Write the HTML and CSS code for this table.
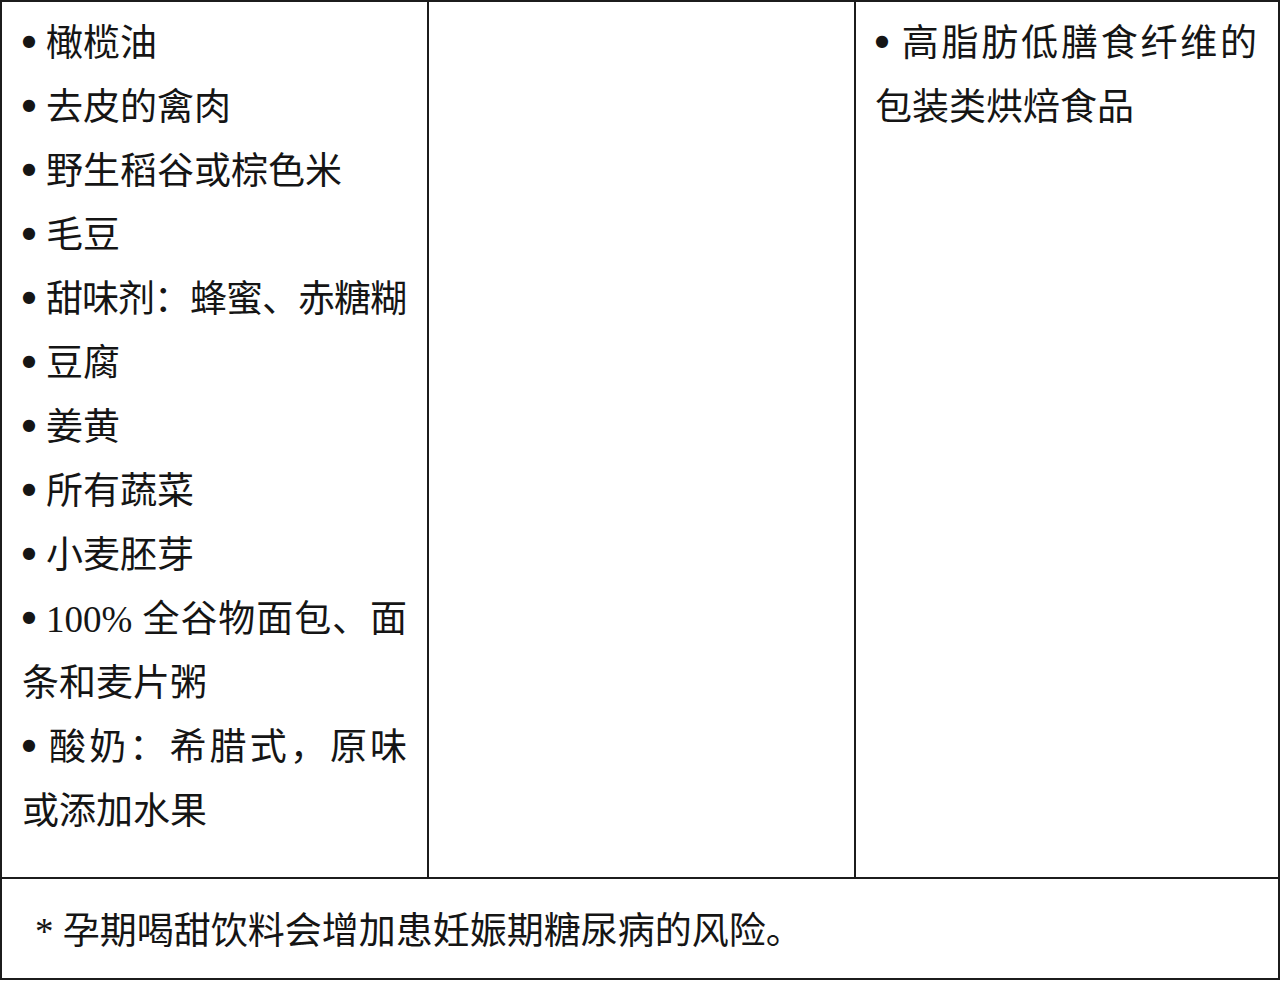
FILE: index.html
```html
<!DOCTYPE html>
<html lang="zh-CN">
<head>
<meta charset="utf-8">
<title>饮食表</title>
<link rel="stylesheet" href="styles.css">
</head>
<body>
<div class="table">
  <div class="row-main">
    <div class="cell cell-first">
      <ul class="items">
        <li><span class="dot">●</span>橄榄油</li>
        <li><span class="dot">●</span>去皮的禽肉</li>
        <li><span class="dot">●</span>野生稻谷或棕色米</li>
        <li><span class="dot">●</span>毛豆</li>
        <li class="tight"><span class="dot">●</span>甜味剂：蜂蜜、赤糖糊</li>
        <li><span class="dot">●</span>豆腐</li>
        <li><span class="dot">●</span>姜黄</li>
        <li><span class="dot">●</span>所有蔬菜</li>
        <li><span class="dot">●</span>小麦胚芽</li>
        <li><span class="dot">●</span>100% 全谷物面包、面条和麦片粥</li>
        <li><span class="dot">●</span>酸奶：希腊式，原味或添加水果</li>
      </ul>
    </div>
    <div class="cell cell-mid"></div>
    <div class="cell cell-last">
      <ul class="items">
        <li><span class="dot">●</span>高脂肪低膳食纤维的包装类烘焙食品</li>
      </ul>
    </div>
  </div>
  <div class="row-note">
    <p class="note">* 孕期喝甜饮料会增加患妊娠期糖尿病的风险。</p>
  </div>
</div>
</body>
</html>
```
FILE: styles.css
```css
html, body {
  margin: 0;
  padding: 0;
  background: #ffffff;
}

body {
  font-family: "Liberation Serif", "Noto Sans CJK SC", serif;
  color: #151515;
  font-size: 37px;
}

.table {
  width: 1280px;
  height: 980px;
  box-sizing: border-box;
  border: 2px solid #1c1c1c;
  display: flex;
  flex-direction: column;
}

.row-main {
  display: grid;
  grid-template-columns: 427px 427px 1fr;
  height: 877px;
  box-sizing: border-box;
  border-bottom: 2px solid #1c1c1c;
}

.cell {
  box-sizing: border-box;
  padding: 10px 20px 0 20px;
}

.cell-first,
.cell-mid {
  border-right: 2px solid #1c1c1c;
}

.cell-last {
  padding-left: 19px;
  padding-right: 21px;
}

.items {
  list-style: none;
  margin: 0;
  padding: 0;
}

.items li {
  line-height: 64px;
  text-align: justify;
}

.items li.tight {
  letter-spacing: -1px;
}

.dot {
  display: inline-block;
  width: 24px;
  font-family: "DejaVu Sans", sans-serif;
  font-size: 16px;
  line-height: 58px;
  vertical-align: top;
  letter-spacing: 0;
  text-indent: 0;
}

.row-note {
  flex: 1;
  padding: 21px 20px 0 33px;
}

.note {
  margin: 0;
  line-height: 64px;
}
```
